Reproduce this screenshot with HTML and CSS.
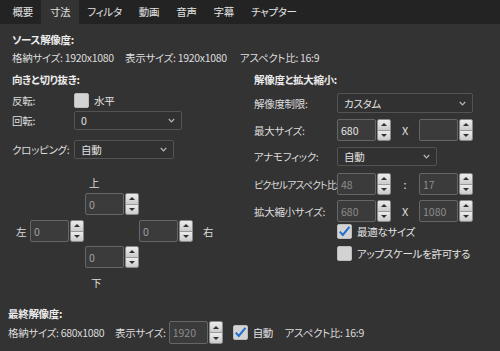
FILE: index.html
```html
<!DOCTYPE html>
<html lang="ja">
<head>
<meta charset="utf-8">
<link rel="stylesheet" href="styles.css">
</head>
<body>
<div class="tabs">
  <div class="tab">概要</div>
  <div class="tab active">寸法</div>
  <div class="tab">フィルタ</div>
  <div class="tab">動画</div>
  <div class="tab">音声</div>
  <div class="tab">字幕</div>
  <div class="tab">チャプター</div>
</div>

<div class="page">
  <div class="h src-h">ソース解像度:</div>
  <div class="info">
    <span class="i1">格納サイズ: 1920x1080</span>
    <span class="i2">表示サイズ: 1920x1080</span>
    <span>アスペクト比: 16:9</span>
  </div>

  <div class="cols">
    <div class="col-left">
      <div class="h col-h">向きと切り抜き:</div>
      <div class="row r-flip">
        <span class="lbl">反転:</span>
        <span class="cb"></span><span class="cbt">水平</span>
      </div>
      <div class="row r-rot">
        <span class="lbl">回転:</span>
        <div class="combo w108"><span>0</span><svg class="chev" width="7" height="5" viewBox="0 0 7 5"><path d="M0.8 1 L3.5 3.8 L6.2 1" fill="none" stroke="#b8b8b8" stroke-width="1.2"/></svg></div>
      </div>
      <div class="row r-crop">
        <span class="lbl">クロッピング:</span>
        <div class="combo w100"><span>自動</span><svg class="chev" width="7" height="5" viewBox="0 0 7 5"><path d="M0.8 1 L3.5 3.8 L6.2 1" fill="none" stroke="#b8b8b8" stroke-width="1.2"/></svg></div>
      </div>
      <div class="clbl c-top">上</div>
      <div class="spin c-spin-top crop">
        <div class="sv">0</div>
        <div class="sb"><i class="up"></i><i class="dn"></i></div>
      </div>
      <div class="c-mid">
        <span class="c-l">左</span>
        <div class="spin crop">
          <div class="sv">0</div>
          <div class="sb"><i class="up"></i><i class="dn"></i></div>
        </div>
        <div class="spin crop c-right">
          <div class="sv">0</div>
          <div class="sb"><i class="up"></i><i class="dn"></i></div>
        </div>
        <span class="c-r">右</span>
      </div>
      <div class="spin c-spin-bot crop">
        <div class="sv">0</div>
        <div class="sb"><i class="up"></i><i class="dn"></i></div>
      </div>
      <div class="clbl c-bot">下</div>
    </div>

    <div class="col-right">
      <div class="h col-h">解像度と拡大縮小:</div>
      <div class="row rr1">
        <span class="lbl">解像度制限:</span>
        <div class="combo w136"><span>カスタム</span><svg class="chev" width="7" height="5" viewBox="0 0 7 5"><path d="M0.8 1 L3.5 3.8 L6.2 1" fill="none" stroke="#b8b8b8" stroke-width="1.2"/></svg></div>
      </div>
      <div class="row rr2">
        <span class="lbl">最大サイズ:</span>
        <div class="spin">
          <div class="sv on">680</div>
          <div class="sb"><i class="up"></i><i class="dn"></i></div>
        </div>
        <span class="sep">X</span>
        <div class="spin">
          <div class="sv on"></div>
          <div class="sb"><i class="up"></i><i class="dn"></i></div>
        </div>
      </div>
      <div class="row rr3">
        <span class="lbl">アナモフィック:</span>
        <div class="combo w100"><span>自動</span><svg class="chev" width="7" height="5" viewBox="0 0 7 5"><path d="M0.8 1 L3.5 3.8 L6.2 1" fill="none" stroke="#b8b8b8" stroke-width="1.2"/></svg></div>
      </div>
      <div class="row rr4">
        <span class="lbl tight">ピクセルアスペクト比:</span>
        <div class="spin">
          <div class="sv">48</div>
          <div class="sb"><i class="up"></i><i class="dn"></i></div>
        </div>
        <span class="sep">:</span>
        <div class="spin">
          <div class="sv">17</div>
          <div class="sb"><i class="up"></i><i class="dn"></i></div>
        </div>
      </div>
      <div class="row rr5">
        <span class="lbl">拡大縮小サイズ:</span>
        <div class="spin">
          <div class="sv">680</div>
          <div class="sb"><i class="up"></i><i class="dn"></i></div>
        </div>
        <span class="sep">X</span>
        <div class="spin">
          <div class="sv">1080</div>
          <div class="sb"><i class="up"></i><i class="dn"></i></div>
        </div>
      </div>
      <div class="row rr6">
        <span class="cb"><svg width="15" height="15" viewBox="0 0 15 15"><path d="M2.8 7.6 L5.8 11 L12.4 2.8" fill="none" stroke="#1f6fd1" stroke-width="2"/></svg></span><span class="cbt">最適なサイズ</span>
      </div>
      <div class="row rr7">
        <span class="cb"></span><span class="cbt">アップスケールを許可する</span>
      </div>
    </div>
  </div>

  <div class="final">
    <div class="h fin-h">最終解像度:</div>
    <div class="fin-row">
      <span class="f1">格納サイズ: 680x1080</span>
      <span class="f2">表示サイズ:</span>
      <div class="spin tall">
        <div class="sv">1920</div>
        <div class="sb"><i class="up"></i><i class="dn"></i></div>
      </div>
      <span class="cb fcb"><svg width="15" height="15" viewBox="0 0 15 15"><path d="M2.8 7.6 L5.8 11 L12.4 2.8" fill="none" stroke="#1f6fd1" stroke-width="2"/></svg></span>
      <span class="cbt f3">自動</span>
      <span>アスペクト比: 16:9</span>
    </div>
  </div>
</div>
</body>
</html>
```

FILE: styles.css
```css
html, body {
  margin: 0;
  padding: 0;
}
body {
  width: 500px;
  height: 351px;
  overflow: hidden;
  background: #333333;
  color: #dcdcdc;
  font-family: "Noto Sans CJK JP", "Noto Sans", sans-serif;
  font-size: 10.5px;
  letter-spacing: -0.3px;
  font-feature-settings: "palt";
}

/* tabs */
.tabs {
  display: flex;
  height: 24px;
  background: #232323;
  padding-left: 4px;
}
.tab {
  padding: 0 8.5px;
  line-height: 24px;
  color: #e2e2e2;
  white-space: nowrap;
}
.tab.active {
  background: #333333;
}

.page {
  display: flex;
  flex-direction: column;
}

.h {
  font-weight: 700;
  color: #ececec;
  white-space: nowrap;
}
.src-h {
  margin: 8px 0 0 12px;
  height: 16px;
  line-height: 16px;
}
.info {
  display: flex;
  margin: 2px 0 0 12px;
  height: 16px;
  line-height: 16px;
  white-space: nowrap;
}
.i1 { min-width: 113px; padding-right: 4px; box-sizing: border-box; }
.i2 { min-width: 115px; padding-right: 4px; box-sizing: border-box; }

/* columns */
.cols {
  display: flex;
  margin-top: 4px;
  padding-left: 12px;
}
.col-left {
  width: 242px;
  display: flex;
  flex-direction: column;
}
.col-right {
  display: flex;
  flex-direction: column;
}
.col-h {
  height: 20px;
  line-height: 20px;
}

.row {
  display: flex;
  align-items: center;
  white-space: nowrap;
}
.col-left .lbl { width: 62px; flex-shrink: 0; }
.col-right .lbl { width: 83px; flex-shrink: 0; }
.col-right .lbl.tight { font-size: 10px; letter-spacing: -1px; }

.r-flip { margin-top: 3px; height: 15px; }
.r-rot { margin-top: 3px; height: 19px; }
.r-crop { margin-top: 10px; height: 19px; }

.rr1 { margin-top: 3px; height: 20px; }
.rr2 { margin-top: 6px; height: 22px; }
.rr3 { margin-top: 6px; height: 19px; }
.rr4 { margin-top: 7px; height: 22px; }
.rr5 { margin-top: 5px; height: 22px; }
.rr6 { margin-top: 2px; height: 15px; padding-left: 83px; }
.rr7 { margin-top: 7px; height: 15px; padding-left: 83px; }

.sep {
  width: 28px;
  text-align: center;
  color: #e0e0e0;
  font-size: 11px;
}

/* combo */
.combo {
  box-sizing: border-box;
  height: 100%;
  border: 1px solid #535353;
  border-radius: 2px;
  background: #313131;
  display: flex;
  align-items: center;
  justify-content: space-between;
  padding: 0 6px 0 6px;
  color: #e0e0e0;
}
.w108 { width: 108px; }
.w100 { width: 100px; }
.w136 { width: 136px; }

/* checkbox */
.cb {
  width: 15px;
  height: 15px;
  box-sizing: border-box;
  background: #d3d3d3;
  border: 1px solid #bdbdbd;
  border-radius: 2px;
  flex-shrink: 0;
  display: block;
  position: relative;
}
.cb svg {
  position: absolute;
  left: -1px;
  top: -1px;
}
.cbt {
  margin-left: 5px;
  color: #e4e4e4;
}

/* spin box */
.spin {
  display: flex;
  width: 54px;
  height: 22px;
  gap: 1px;
  flex-shrink: 0;
}
.spin.tall { height: 23px; }
.sv {
  flex: 1;
  box-sizing: border-box;
  border: 1px solid #666666;
  border-radius: 2px;
  background: #3b3b3b;
  padding-left: 3px;
  display: flex;
  align-items: center;
  color: #8c8c8c;
  letter-spacing: 0;
}
.sv.on { color: #e6e6e6; }
.crop .sv { color: #a0a0a0; }
.sb {
  width: 14px;
  box-sizing: border-box;
  display: flex;
  flex-direction: column;
  border: 1px solid #8a8a8a;
  border-radius: 2px;
  overflow: hidden;
}
.sb i {
  flex: 1;
  display: flex;
  align-items: center;
  justify-content: center;
  background: linear-gradient(#ececec, #cbcbcb);
}
.sb i + i {
  border-top: 1px solid #9a9a9a;
}
.sb i::before {
  content: "";
  width: 0;
  height: 0;
  border-left: 3px solid transparent;
  border-right: 3px solid transparent;
}
.sb .up::before { border-bottom: 3px solid #303030; }
.sb .dn::before { border-top: 3px solid #303030; }

/* crop diamond */
.clbl {
  height: 14px;
  line-height: 14px;
}
.c-top { margin-top: 17px; padding-left: 77px; }
.c-spin-top { margin-top: 3px; margin-left: 73px; }
.c-mid {
  margin-top: 5px;
  display: flex;
  align-items: center;
  height: 22px;
  padding-left: 4px;
}
.c-l { width: 14px; }
.c-right { margin-left: 55px; }
.c-r { margin-left: 10px; }
.c-spin-bot { margin-top: 4px; margin-left: 73px; }
.c-bot { margin-top: 8px; padding-left: 79px; }

/* final */
.final {
  padding-left: 8px;
  margin-top: 17px;
  display: flex;
  flex-direction: column;
}
.fin-h {
  height: 14px;
  line-height: 14px;
}
.fin-row {
  display: flex;
  align-items: center;
  height: 23px;
  white-space: nowrap;
}
.f1 { min-width: 107px; padding-right: 4px; box-sizing: border-box; }
.f2 { min-width: 48px; padding-right: 3px; box-sizing: border-box; }
.fcb { margin-left: 10px; }
.f3 { width: 32px; }
```
